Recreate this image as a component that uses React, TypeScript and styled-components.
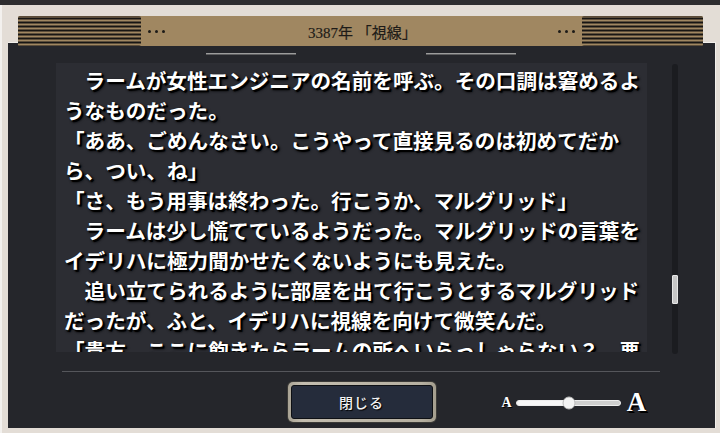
import styled, { createGlobalStyle } from "styled-components";

const GlobalStyle = createGlobalStyle`
  html, body {
    margin: 0;
    padding: 0;
    background: #2d2d2f;
  }
  * {
    box-sizing: border-box;
  }
`;

const SERIF = `"Liberation Serif", "Noto Sans CJK JP", serif`;
const JP = `"Noto Sans CJK JP", "Noto Sans CJK SC", sans-serif`;
// -----------

const paragraphs = [
  "　ラームが女性エンジニアの名前を呼ぶ。その口調は窘めるようなものだった。",
  "「ああ、ごめんなさい。こうやって直接見るのは初めてだから、つい、ね」",
  "「さ、もう用事は終わった。行こうか、マルグリッド」",
  "　ラームは少し慌てているようだった。マルグリッドの言葉をイデリハに極力聞かせたくないようにも見えた。",
  "　追い立てられるように部屋を出て行こうとするマルグリッドだったが、ふと、イデリハに視線を向けて微笑んだ。",
  "「貴方、ここに飽きたらラームの所へいらっしゃらない？　悪い話じゃないと思うけど」",
];

function Dots() {
  return (
    <DotGroup>
      <i />
      <i />
      <i />
    </DotGroup>
  );
}

function FontSlider({ value }: { value: number }) {
  return (
    <SliderWrap>
      <SmallA>A</SmallA>
      <Track>
        <Fill style={{ width: `${value}%` }} />
        <Thumb style={{ left: `${value}%` }} />
      </Track>
      <BigA>A</BigA>
    </SliderWrap>
  );
}

export default function App() {
  return (
    <>
      <GlobalStyle />
      <Screen>
        <Frame>
          <Header>
            <Stripes $w={123} />
            <Dots />
            <Title>3387年 「視線」</Title>
            <Dots />
            <Stripes $w={121} />
          </Header>
          <Panel>
            <Ornaments>
              <Rule />
              <Rule />
            </Ornaments>
            <Body>
              <TextBox>
                {paragraphs.map((p, i) => (
                  <Para key={i}>{p}</Para>
                ))}
              </TextBox>
              <ScrollTrack>
                <ScrollThumb />
              </ScrollTrack>
            </Body>
            <Divider />
            <Footer>
              <span />
              <CloseButton>
                <span>閉じる</span>
              </CloseButton>
              <FontSlider value={51} />
            </Footer>
          </Panel>
        </Frame>
      </Screen>
    </>
  );
}
// ------------------------

const Screen = styled.div`
  width: 720px;
  height: 433px;
  padding-top: 5px;
  background: #2d2d2f;
  overflow: hidden;
`;

const Frame = styled.div`
  height: 428px;
  background: #e3ddd6;
  border-left: 2px solid #f3f1ee;
  display: flex;
  flex-direction: column;
  padding-top: 11px;
`;

const Header = styled.div`
  position: relative;
  z-index: 1;
  height: 30px;
  margin: 0 17px 0 16px;
  background: #a08761;
  border-radius: 2px;
  display: flex;
  align-items: center;
  color: #1d1b18;
`;

const Stripes = styled.div<{ $w: number }>`
  width: ${(p) => p.$w}px;
  height: 100%;
  flex: none;
  background: repeating-linear-gradient(
    to bottom,
    #a08761 0px,
    #a08761 1.5px,
    #171614 1.5px,
    #171614 3px,
    #a08761 3px,
    #a08761 4px
  );
  background-position: 0 0.5px;
  border-radius: 2px;
`;

const DotGroup = styled.div`
  display: flex;
  gap: 4px;
  margin: 0 7px;
  i {
    width: 3px;
    height: 3px;
    border-radius: 50%;
    background: #1d1b18;
  }
`;

const Title = styled.div`
  flex: 1;
  text-align: center;
  font-family: ${SERIF};
  font-size: 15px;
  padding-left: 2px;
  -webkit-text-stroke: 0.2px #1d1b18;
`;

const Panel = styled.div`
  margin: -4px 4px 0 6px;
  height: 386px;
  background: #25262b;
  border-top: 1px solid #f2efeb;
  border-right: 1px solid #f2efeb;
  padding-top: 10px;
  display: flex;
  flex-direction: column;
`;

const Ornaments = styled.div`
  display: flex;
  justify-content: center;
  gap: 130px;
  padding-right: 2px;
`;

const Rule = styled.div`
  width: 90px;
  height: 2px;
  background: #9c9c9c;
  border-bottom: 1px solid #5e5e60;
`;

const Body = styled.div`
  display: flex;
  align-items: flex-start;
  margin: 8px 0 0 48px;
  gap: 25px;
`;

const TextBox = styled.div`
  width: 591px;
  height: 289px;
  overflow: hidden;
  background: #2c2d33;
  padding: 2px 0 0 8px;
  font-family: ${JP};
  font-weight: 700;
  font-size: 20.6px;
  line-height: 30px;
  color: #ffffff;
  text-shadow: 2px 2px 0 #000, 1px 1px 2px #000, 2px 2px 3px #000;
`;

const Para = styled.p`
  margin: 0;
  width: 28em;
  line-break: strict;
`;

const ScrollTrack = styled.div`
  width: 6px;
  height: 290px;
  margin-top: 1px;
  background: #1b1c20;
  border-radius: 3px;
  padding-top: 211px;
`;

const ScrollThumb = styled.div`
  width: 6px;
  height: 29px;
  background: #c6c6c6;
  border: 1px solid #e6e6e6;
  border-radius: 1px;
`;

const Divider = styled.div`
  margin: 17px 0 0 54px;
  width: 598px;
  height: 1px;
  background: #55565b;
`;

const Footer = styled.div`
  display: grid;
  grid-template-columns: 1fr auto 1fr;
  align-items: center;
  margin-top: 10px;
`;

const CloseButton = styled.button`
  width: 148px;
  height: 40px;
  padding: 3px;
  border: none;
  border-radius: 5px;
  background: linear-gradient(to right, #a9a394, #c3bdaf 10%, #b6b0a1 90%, #a39d8e);
  box-shadow: 0 0 0 1px #3b3a37;
  cursor: pointer;
  span {
    display: flex;
    align-items: center;
    justify-content: center;
    height: 100%;
    background: #252c3b;
    border: 1px solid #0e1014;
    border-radius: 3px;
    color: #f2f2f2;
    font-family: ${JP};
    font-size: 14px;
    line-height: 1;
    font-weight: 500;
    letter-spacing: 1px;
    text-shadow: 1px 1px 1px #000;
  }
`;

const SliderWrap = styled.div`
  justify-self: start;
  display: flex;
  align-items: center;
  margin-left: 66px;
  padding-top: 1px;
`;

const SmallA = styled.span`
  font-family: ${SERIF};
  font-weight: 700;
  font-size: 14px;
  line-height: 1;
  color: #fff;
  text-shadow: 1px 1px 0 #000;
  margin-right: 4px;
`;

const Track = styled.div`
  position: relative;
  width: 105px;
  height: 6px;
  border-radius: 3px;
  background: #cfcfcf;
  border: 1px solid #eeeeee;
`;

const Fill = styled.div`
  height: 100%;
  border-radius: 3px;
  background: #f7f7f7;
`;

const Thumb = styled.div`
  position: absolute;
  top: 50%;
  width: 13px;
  height: 13px;
  border-radius: 50%;
  background: #f4f4f4;
  border: 1px solid #bcbcbc;
  transform: translate(-50%, -50%);
`;

const BigA = styled.span`
  font-family: ${SERIF};
  font-weight: 700;
  font-size: 27px;
  line-height: 1;
  color: #fff;
  text-shadow: 2px 2px 0 #000, 1px 1px 1px #000;
  margin-left: 6px;
`;
